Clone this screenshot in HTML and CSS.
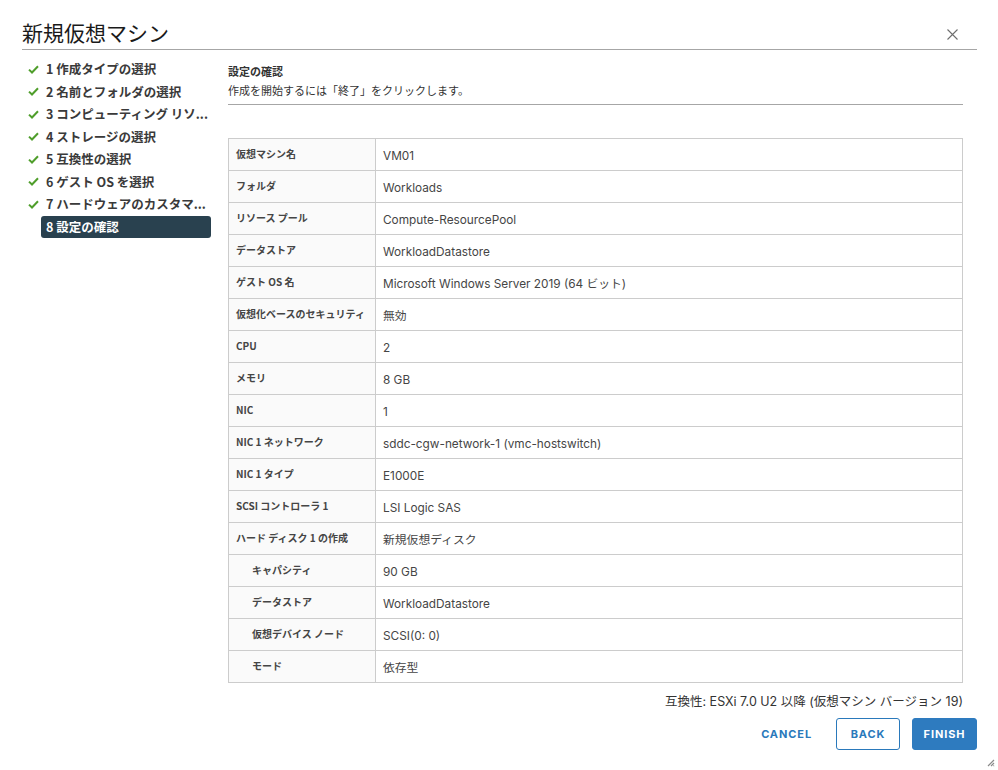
FILE: index.html
```html
<!DOCTYPE html>
<html lang="ja">
<head>
<meta charset="utf-8">
<title>新規仮想マシン</title>
<link rel="stylesheet" href="styles.css">
</head>
<body>
<div class="modal">
  <div class="header">
    <h1 class="title">新規仮想マシン</h1>
    <button class="close" aria-label="close">
      <svg width="11" height="11" viewBox="0 0 11 11"><path d="M0.5 0.5L10.5 10.5M10.5 0.5L0.5 10.5" stroke="#6e6e6e" stroke-width="1.1" fill="none"/></svg>
    </button>
  </div>
  <div class="body">
    <nav class="steps">
      <div class="step"><span class="ico"><svg width="11" height="9" viewBox="0 0 11 9"><path d="M1 4.6L4 7.5L10 1.3" stroke="#4f9e2b" stroke-width="2" fill="none"/></svg></span><span class="label">1 作成タイプの選択</span></div>
      <div class="step"><span class="ico"><svg width="11" height="9" viewBox="0 0 11 9"><path d="M1 4.6L4 7.5L10 1.3" stroke="#4f9e2b" stroke-width="2" fill="none"/></svg></span><span class="label">2 名前とフォルダの選択</span></div>
      <div class="step"><span class="ico"><svg width="11" height="9" viewBox="0 0 11 9"><path d="M1 4.6L4 7.5L10 1.3" stroke="#4f9e2b" stroke-width="2" fill="none"/></svg></span><span class="label">3 コンピューティング リソ...</span></div>
      <div class="step"><span class="ico"><svg width="11" height="9" viewBox="0 0 11 9"><path d="M1 4.6L4 7.5L10 1.3" stroke="#4f9e2b" stroke-width="2" fill="none"/></svg></span><span class="label">4 ストレージの選択</span></div>
      <div class="step"><span class="ico"><svg width="11" height="9" viewBox="0 0 11 9"><path d="M1 4.6L4 7.5L10 1.3" stroke="#4f9e2b" stroke-width="2" fill="none"/></svg></span><span class="label">5 互換性の選択</span></div>
      <div class="step"><span class="ico"><svg width="11" height="9" viewBox="0 0 11 9"><path d="M1 4.6L4 7.5L10 1.3" stroke="#4f9e2b" stroke-width="2" fill="none"/></svg></span><span class="label">6 ゲスト OS を選択</span></div>
      <div class="step"><span class="ico"><svg width="11" height="9" viewBox="0 0 11 9"><path d="M1 4.6L4 7.5L10 1.3" stroke="#4f9e2b" stroke-width="2" fill="none"/></svg></span><span class="label">7 ハードウェアのカスタマ...</span></div>
      <div class="step active"><span class="ico"></span><span class="label">8 設定の確認</span></div>
    </nav>
    <main class="content">
      <div class="intro">
        <div class="intro-title">設定の確認</div>
        <div class="intro-text">作成を開始するには「終了」をクリックします。</div>
      </div>
      <table class="summary">
        <tr><th>仮想マシン名</th><td>VM01</td></tr>
        <tr><th>フォルダ</th><td>Workloads</td></tr>
        <tr><th>リソース プール</th><td>Compute-ResourcePool</td></tr>
        <tr><th>データストア</th><td>WorkloadDatastore</td></tr>
        <tr><th>ゲスト OS 名</th><td>Microsoft Windows Server 2019 (64 ビット)</td></tr>
        <tr><th>仮想化ベースのセキュリティ</th><td>無効</td></tr>
        <tr><th>CPU</th><td>2</td></tr>
        <tr><th>メモリ</th><td>8 GB</td></tr>
        <tr><th>NIC</th><td>1</td></tr>
        <tr><th>NIC 1 ネットワーク</th><td>sddc-cgw-network-1 (vmc-hostswitch)</td></tr>
        <tr><th>NIC 1 タイプ</th><td>E1000E</td></tr>
        <tr><th>SCSI コントローラ 1</th><td>LSI Logic SAS</td></tr>
        <tr><th>ハード ディスク 1 の作成</th><td>新規仮想ディスク</td></tr>
        <tr><th class="sub">キャパシティ</th><td>90 GB</td></tr>
        <tr><th class="sub">データストア</th><td>WorkloadDatastore</td></tr>
        <tr><th class="sub">仮想デバイス ノード</th><td>SCSI(0: 0)</td></tr>
        <tr><th class="sub">モード</th><td>依存型</td></tr>
      </table>
      <div class="compat">互換性: ESXi 7.0 U2 以降 (仮想マシン バージョン 19)</div>
    </main>
  </div>
  <div class="footer">
    <button class="btn btn-link">CANCEL</button>
    <button class="btn btn-outline">BACK</button>
    <button class="btn btn-primary">FINISH</button>
  </div>
  <div class="resize">
    <svg width="8" height="8" viewBox="0 0 8 8"><path d="M1 7L7 1M4 7L7 4M6.5 7L7 6.5" stroke="#8a8a8a" stroke-width="1.2" fill="none"/></svg>
  </div>
</div>
</body>
</html>
```
FILE: styles.css
```css
* { box-sizing: border-box; }
html, body { margin: 0; padding: 0; background: #fff; }
body {
  font-family: Inter, "Noto Sans CJK JP", sans-serif;
  color: #313131;
}
.modal {
  position: relative;
  width: 998px;
  height: 770px;
  background: #fff;
  overflow: hidden;
}
.header {
  display: flex;
  justify-content: space-between;
  align-items: flex-end;
  margin: 0 21px 0 22px;
  height: 50px;
  border-bottom: 1px solid #a6a6a6;
}
.title {
  margin: 0 0 3px 0;
  font-family: "Noto Sans CJK JP", sans-serif;
  font-weight: 400;
  font-size: 21px;
  line-height: 28px;
  color: #1a1a1a;
}
.close {
  border: 0;
  background: none;
  padding: 0;
  margin: 0 19px 9px 0;
  width: 11px;
  height: 11px;
  display: flex;
}
.body {
  display: flex;
  gap: 17px;
  padding-left: 28px;
}
.steps {
  width: 183px;
  padding-top: 8px;
  display: flex;
  flex-direction: column;
}
.step {
  display: flex;
  align-items: center;
  height: 22.5px;
}
.ico {
  width: 13px;
  flex: none;
  display: flex;
  align-items: center;
}
.label {
  flex: 1;
  font-family: "Noto Sans CJK JP", sans-serif;
  font-weight: 700;
  font-size: 12.5px;
  line-height: 22px;
  height: 22px;
  padding-left: 5px;
  color: #3a3a3a;
  white-space: nowrap;
}
.step.active .label {
  background: #29414f;
  color: #fff;
  border-radius: 3px;
}
.content {
  width: 735px;
  display: flex;
  flex-direction: column;
}
.content > * { flex: none; }
.intro {
  padding-top: 13px;
  height: 55px;
  border-bottom: 1px solid #a6a6a6;
}
.intro-title {
  font-family: "Noto Sans CJK JP", sans-serif;
  font-weight: 700;
  font-size: 11px;
  line-height: 16px;
  color: #333;
}
.intro-text {
  margin-top: 3px;
  font-family: "Noto Sans CJK JP", sans-serif;
  font-size: 11px;
  line-height: 16px;
  color: #333;
}
.summary {
  margin-top: 33px;
  width: 735px;
  border-collapse: collapse;
  border: 1px solid #ccc;
}
.summary tr { height: 32px; }
.summary th, .summary td {
  border-bottom: 1px solid #ccc;
  padding: 0;
}
.summary th {
  width: 147px;
  background: #fafafa;
  border-right: 1px solid #ccc;
  text-align: left;
  vertical-align: top;
  padding: 8px 7px 0 7px;
  font-family: "Noto Sans CJK JP", sans-serif;
  font-weight: 700;
  font-size: 10px;
  line-height: 14px;
  color: #454545;
  white-space: nowrap;
}
.summary th.sub { padding-left: 23px; }
.summary td {
  vertical-align: top;
  padding: 10px 7px 0 7px;
  font-size: 11.8px;
  line-height: 15px;
  color: #454545;
}
.compat {
  margin-top: 11px;
  text-align: right;
  font-size: 12.5px;
  line-height: 16px;
  color: #333;
}
.footer {
  position: absolute;
  right: 21px;
  top: 718px;
  display: flex;
  gap: 12px;
}
.btn {
  height: 32px;
  padding: 0 11px;
  font-family: Inter, sans-serif;
  font-weight: 700;
  font-size: 11px;
  letter-spacing: 0.9px;
  border-radius: 3px;
  border: 1px solid transparent;
  background: none;
  color: #2a79bb;
  cursor: pointer;
}
.btn-outline { border-color: #2a79bb; width: 64px; padding: 0; }
.btn-primary { background: #2e7bbf; color: #fff; border-color: #2e7bbf; width: 65px; padding: 0; }
.resize {
  position: absolute;
  right: 3px;
  bottom: 3px;
  width: 8px;
  height: 8px;
  display: flex;
}
```
